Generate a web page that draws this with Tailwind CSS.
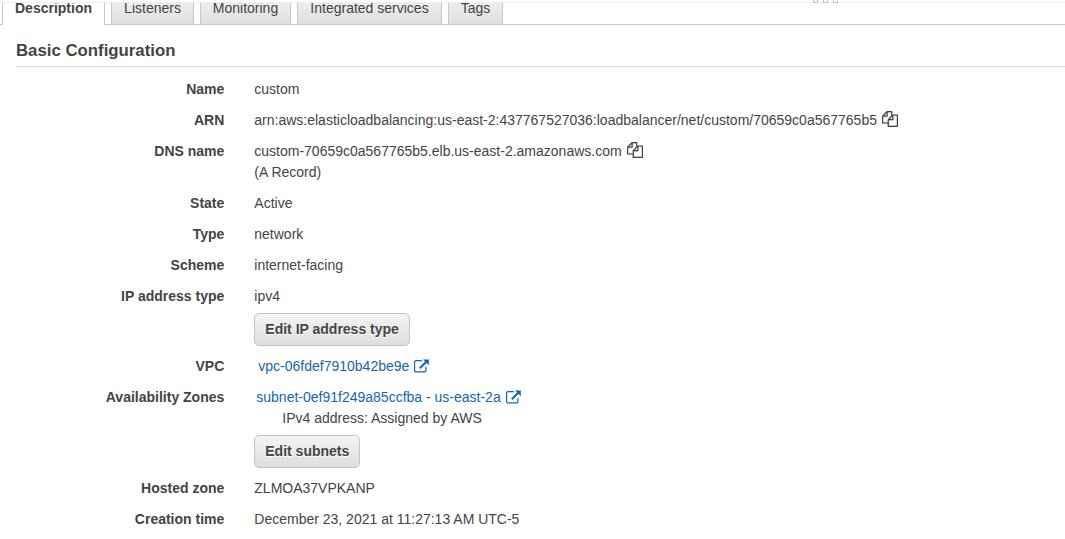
<!DOCTYPE html>
<html lang="en">
<head>
<meta charset="utf-8">
<title>Load balancer</title>
<script src="https://cdn.jsdelivr.net/npm/@tailwindcss/browser@4"></script>
</head>
<body class="h-[539px] overflow-hidden bg-white font-['Liberation_Sans',Arial,sans-serif] text-sm leading-[21px] text-[#444]">
<svg class="hidden">
  <symbol id="copy" viewBox="0 0 1792 1792"><path fill="currentColor" stroke="currentColor" stroke-width="20" d="M1696 384q40 0 68 28t28 68v1216q0 40-28 68t-68 28h-960q-40 0-68-28t-28-68v-288h-544q-40 0-68-28t-28-68v-672q0-40 20-88t48-76l408-408q28-28 76-48t88-20h416q40 0 68 28t28 68v328q68-40 128-40h416zm-544 213l-299 299h299v-299zm-640-384l-299 299h299v-299zm196 647l316-316v-416h-384v416q0 40-28 68t-68 28h-416v640h512v-256q0-40 20-88t48-76zm956 804v-1152h-384v416q0 40-28 68t-68 28h-416v640h896z"/></symbol>
  <symbol id="external" viewBox="0 0 16 14"><path fill="none" stroke="currentColor" stroke-width="1.2" d="M8 1.600H2.100a1.500 1.500 0 0 0-1.500 1.500v8.300a1.500 1.500 0 0 0 1.500 1.500h8.300a1.500 1.500 0 0 0 1.500-1.500V8"/><path fill="none" stroke="currentColor" stroke-width="2" d="M5.800 9.200l6.700-6.700"/><path fill="currentColor" d="M9 .5H14.800v5.800z"/></symbol>
</svg>

<div class="relative h-[3px] border-b border-[#eee]">
  <div class="absolute left-[813px] top-0 flex gap-[5px]">
    <i class="h-[3px] w-[5px] border border-t-0 border-[#c4c4c4] bg-white"></i>
    <i class="h-[3px] w-[5px] border border-t-0 border-[#c4c4c4] bg-white"></i>
    <i class="h-[3px] w-[5px] border border-t-0 border-[#c4c4c4] bg-white"></i>
  </div>
</div>

<nav class="flex h-[22px] items-start overflow-hidden">
  <div class="h-[22px] w-0.5 border-b border-[#c8c8c8]"></div>
  <div class="flex h-[22px] w-[103px] items-start justify-center border-x border-[#c8c8c8] bg-white font-bold"><span class="-mt-[5px]">Description</span></div>
  <div class="h-[22px] w-1.5 border-b border-[#c8c8c8]"></div>
  <div class="flex h-[22px] w-[83px] items-start justify-center border-x border-b border-[#c8c8c8] bg-linear-to-b from-[#ededed] to-[#dedede]"><span class="-mt-[5px]">Listeners</span></div>
  <div class="h-[22px] w-1.5 border-b border-[#c8c8c8]"></div>
  <div class="flex h-[22px] w-[91px] items-start justify-center border-x border-b border-[#c8c8c8] bg-linear-to-b from-[#ededed] to-[#dedede]"><span class="-mt-[5px]">Monitoring</span></div>
  <div class="h-[22px] w-1.5 border-b border-[#c8c8c8]"></div>
  <div class="flex h-[22px] w-[145px] items-start justify-center whitespace-nowrap border-x border-b border-[#c8c8c8] bg-linear-to-b from-[#ededed] to-[#dedede]"><span class="-mt-[5px]">Integrated services</span></div>
  <div class="h-[22px] w-1.5 border-b border-[#c8c8c8]"></div>
  <div class="flex h-[22px] w-[55px] items-start justify-center border-x border-b border-[#c8c8c8] bg-linear-to-b from-[#ededed] to-[#dedede]"><span class="-mt-[5px]">Tags</span></div>
  <div class="h-[22px] flex-1 border-b border-[#c8c8c8]"></div>
</nav>

<main class="pl-4">
  <h2 class="h-[42px] border-b border-[#ddd] pt-[15px] text-[16.8px] font-bold">Basic Configuration</h2>
  <dl class="grid grid-cols-[208.3px_1fr] gap-x-[30px] gap-y-2.5 pt-3 [&>dt]:text-right [&>dt]:font-bold">
    <dt>Name</dt><dd>custom</dd>
    <dt>ARN</dt>
    <dd class="flex"><span>arn:aws:elasticloadbalancing:us-east-2:437767527036:loadbalancer/net/custom/70659c0a567765b5</span><svg class="ml-[5px] mt-px size-4"><use href="#copy"/></svg></dd>
    <dt>DNS name</dt>
    <dd><div class="flex"><span>custom-70659c0a567765b5.elb.us-east-2.amazonaws.com</span><svg class="ml-[5.2px] mt-px size-4"><use href="#copy"/></svg></div><div>(A Record)</div></dd>
    <dt>State</dt><dd>Active</dd>
    <dt>Type</dt><dd>network</dd>
    <dt>Scheme</dt><dd>internet-facing</dd>
    <dt>IP address type</dt>
    <dd><div>ipv4</div><button class="mt-1.5 block h-[33px] w-[155.6px] rounded-[5px] border border-[#c4c4c4] bg-linear-to-b from-[#f4f4f4] to-[#dedede] font-bold [text-shadow:0_1px_0_#fff]">Edit IP address type</button></dd>
    <dt>VPC</dt>
    <dd class="flex pl-1 text-[#1166bb]"><a>vpc-06fdef7910b42be9e</a><svg class="ml-[5px] mt-[3px] h-3.5 w-4"><use href="#external"/></svg></dd>
    <dt>Availability Zones</dt>
    <dd>
      <div class="flex pl-0.5 text-[#1166bb]"><a>subnet-0ef91f249a85ccfba - us-east-2a</a><svg class="ml-[5.200px] mt-[3px] h-3.5 w-4"><use href="#external"/></svg></div>
      <div class="pl-7">IPv4 address: Assigned by AWS</div>
      <button class="mt-1.5 block h-[33px] w-[106px] rounded-[5px] border border-[#c4c4c4] bg-linear-to-b from-[#f4f4f4] to-[#dedede] font-bold [text-shadow:0_1px_0_#fff]">Edit subnets</button>
    </dd>
    <dt>Hosted zone</dt><dd>ZLMOA37VPKANP</dd>
    <dt>Creation time</dt><dd>December 23, 2021 at 11:27:13 AM UTC-5</dd>
  </dl>
</main>
</body>
</html>
